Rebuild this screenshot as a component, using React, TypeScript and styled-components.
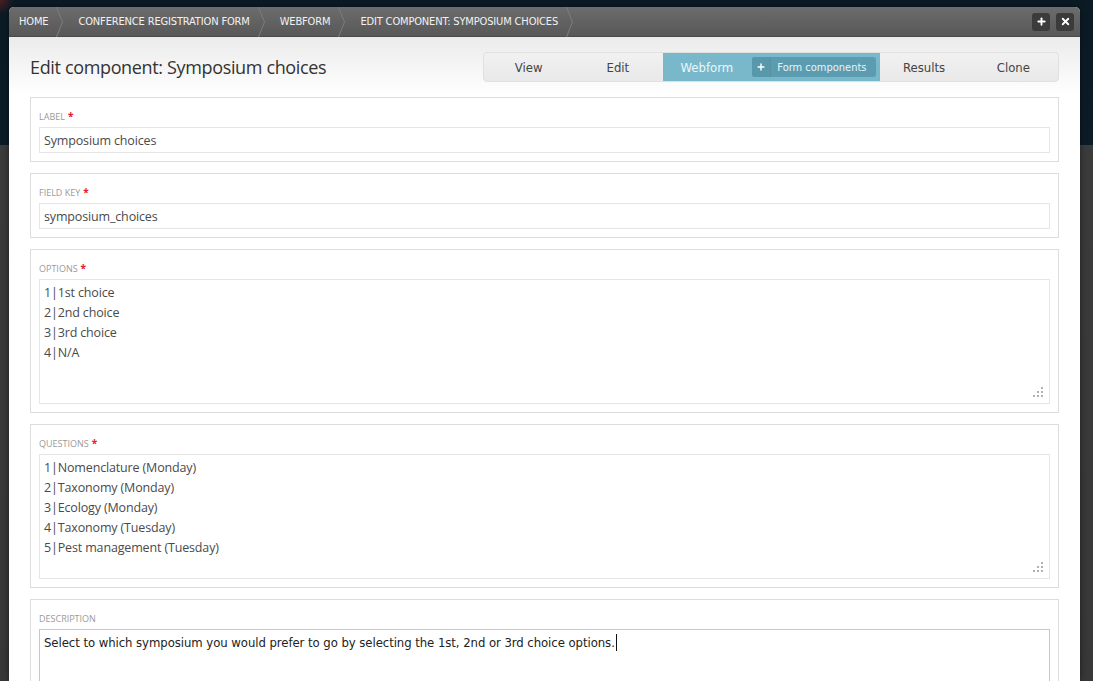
import React from "react";
import styled, { createGlobalStyle } from "styled-components";
import { Plus, X } from "lucide-react";

const CONDENSED = `"Liberation Sans Narrow", "DejaVu Sans Condensed", "Roboto Condensed", "Liberation Sans", sans-serif`;
const BODY = `"Open Sans", "Noto Sans", sans-serif`;

const GlobalStyle = createGlobalStyle`
  html, body {
    margin: 0;
    height: 100%;
    overflow: hidden;
  }
  body {
    font-family: ${BODY};
    background: #3a3a3a;
  }
`;

type Field = {
  label: string;
  required?: boolean;
  kind: "input" | "textarea";
  lines: string[];
  focused?: boolean;
};

const fields: Field[] = [
  { label: "Label", required: true, kind: "input", lines: ["Symposium choices"] },
  { label: "Field key", required: true, kind: "input", lines: ["symposium_choices"] },
  {
    label: "Options",
    required: true,
    kind: "textarea",
    lines: ["1|1st choice", "2|2nd choice", "3|3rd choice", "4|N/A"],
  },
  {
    label: "Questions",
    required: true,
    kind: "textarea",
    lines: [
      "1|Nomenclature (Monday)",
      "2|Taxonomy (Monday)",
      "3|Ecology (Monday)",
      "4|Taxonomy (Tuesday)",
      "5|Pest management (Tuesday)",
    ],
  },
  {
    label: "Description",
    kind: "textarea",
    focused: true,
    lines: [
      "Select to which symposium you would prefer to go by selecting the 1st, 2nd or 3rd choice options.",
    ],
  },
];

const crumbs = [
  "Home",
  "Conference registration form",
  "Webform",
  "Edit component: Symposium choices",
];

export default function App() {
  return (
    <>
      <GlobalStyle />
      <Backdrop>
        <Modal>
          <HeaderBar>
            <Crumbs>
              {crumbs.map((c) => (
                <Crumb key={c}>
                  <span>{c}</span>
                  <Chevron width="7" height="30" viewBox="0 0 7 30">
                    <polyline points="0.5,0 6.5,15 0.5,30" fill="none" stroke="#7c7c7c" strokeWidth="1" />
                  </Chevron>
                </Crumb>
              ))}
            </Crumbs>
            <HeaderButtons>
              <IconButton>
                <Plus size={11} strokeWidth={4} />
              </IconButton>
              <IconButton>
                <X size={11} strokeWidth={4} />
              </IconButton>
            </HeaderButtons>
          </HeaderBar>

          <TitleRow>
            <Title>Edit component: Symposium choices</Title>
            <Tabs>
              <Tab>View</Tab>
              <Tab>Edit</Tab>
              <ActiveTab>
                Webform
                <SubButton>
                  <SubPlus>
                    <Plus size={10} strokeWidth={3.5} />
                  </SubPlus>
                  <SubLabel>Form components</SubLabel>
                </SubButton>
              </ActiveTab>
              <Tab>Results</Tab>
              <Tab>Clone</Tab>
            </Tabs>
          </TitleRow>

          <Form>
            {fields.map((f) => (
              <FieldSet key={f.label}>
                <Label>
                  {f.label}
                  {f.required && <Req>*</Req>}
                </Label>
                {f.kind === "input" ? (
                  <Input>{f.lines[0]}</Input>
                ) : (
                  <TextArea $focused={f.focused}>
                    {f.lines.map((l, i) => (
                      <Line key={i} $condensed={f.focused}>
                        {l}
                        {f.focused && <Caret />}
                      </Line>
                    ))}
                    {!f.focused && (
                      <Grip width="10" height="10" viewBox="0 0 10 10">
                        <rect x="8" y="0" width="2" height="2" fill="#b0b0b0" />
                        <rect x="4" y="4" width="2" height="2" fill="#b0b0b0" />
                        <rect x="8" y="4" width="2" height="2" fill="#b0b0b0" />
                        <rect x="0" y="8" width="2" height="2" fill="#b0b0b0" />
                        <rect x="4" y="8" width="2" height="2" fill="#b0b0b0" />
                        <rect x="8" y="8" width="2" height="2" fill="#b0b0b0" />
                      </Grip>
                    )}
                  </TextArea>
                )}
              </FieldSet>
            ))}
          </Form>
        </Modal>
      </Backdrop>
    </>
  );
}

const Backdrop = styled.div`
  height: 681px;
  padding: 7px 13px 0 9px;
  box-sizing: border-box;
  background:
    radial-gradient(circle at 0 0, rgba(120, 30, 30, 0.6), rgba(120, 30, 30, 0) 14px),
    linear-gradient(to bottom, #0b1b25 0, #0c1c26 145px, #3b3b3b 145px, #383838 100%);
`;

const Modal = styled.div`
  height: 100%;
  background: #fff;
  border-radius: 5px 5px 0 0;
  overflow: hidden;
  display: flex;
  flex-direction: column;
  box-shadow: 0 0 6px rgba(0, 0, 0, 0.5);
`;

const HeaderBar = styled.div`
  height: 30px;
  flex: none;
  display: flex;
  align-items: center;
  justify-content: space-between;
  background: linear-gradient(to bottom, #6c6c6c, #585858);
  border-bottom: 1px solid #4a4a4a;
  box-sizing: border-box;
  padding: 0 6px 0 10px;
`;

const Crumbs = styled.div`
  display: flex;
  align-items: center;
  height: 100%;
`;

const Crumb = styled.div`
  display: flex;
  align-items: center;
  height: 100%;
  font-family: ${CONDENSED};
  font-stretch: condensed;
  font-size: 11px;
  letter-spacing: -0.15px;
  text-transform: uppercase;
  color: #f2f2f2;

  > span {
    margin-right: 8px;
  }
  & + & {
    padding-left: 15px;
  }
`;

const Chevron = styled.svg`
  display: block;
  flex: none;
`;

const HeaderButtons = styled.div`
  display: flex;
  gap: 6px;
`;

const IconButton = styled.div`
  width: 18px;
  height: 18px;
  border-radius: 3px;
  background: #3b3b3b;
  color: #fff;
  display: flex;
  align-items: center;
  justify-content: center;
`;

const TitleRow = styled.div`
  flex: none;
  display: flex;
  align-items: center;
  justify-content: space-between;
  padding: 15px 21px;
  background: linear-gradient(to bottom, #ebebeb 0, #fff 58px);
`;

const Title = styled.h1`
  margin: 0;
  font-family: ${BODY};
  font-weight: 400;
  font-size: 18px;
  color: #333;
  letter-spacing: -0.35px;
`;

const Tabs = styled.div`
  display: flex;
  height: 30px;
  width: 576px;
  box-sizing: border-box;
  border: 1px solid #e0e0e0;
  border-radius: 4px;
  background: linear-gradient(to bottom, #f1f1f1, #e9e9e9);
  overflow: hidden;
`;

const Tab = styled.div`
  flex: 1;
  display: flex;
  align-items: center;
  justify-content: center;
  font-family: ${CONDENSED};
  font-stretch: condensed;
  font-size: 13px;
  color: #444;
`;

const ActiveTab = styled.div`
  width: 217px;
  flex: none;
  display: flex;
  align-items: center;
  justify-content: space-between;
  padding: 0 4px 0 18px;
  box-sizing: border-box;
  background: #79b8ca;
  font-family: ${CONDENSED};
  font-stretch: condensed;
  font-size: 13px;
  color: #eaf6fa;
`;

const SubButton = styled.div`
  display: flex;
  align-items: center;
  height: 20px;
  border-radius: 3px;
  background: #5b9cb0;
  overflow: hidden;
`;

const SubPlus = styled.div`
  width: 18px;
  height: 100%;
  display: flex;
  align-items: center;
  justify-content: center;
  color: #fff;
  border-right: 1px solid #56929f;
  background: #5898ab;
`;

const SubLabel = styled.span`
  padding: 0 9px 0 6px;
  font-size: 11px;
  color: #e8f4f8;
`;

const Form = styled.div`
  display: flex;
  flex-direction: column;
  gap: 11px;
  padding: 0 21px;
`;

const FieldSet = styled.div`
  border: 1px solid #dcdcdc;
  padding: 12px 8px 8px;
  display: flex;
  flex-direction: column;
`;

const Label = styled.div`
  height: 14px;
  font-family: ${BODY};
  font-size: 9px;
  line-height: 14px;
  text-transform: uppercase;
  color: #9a9a9a;
  margin-bottom: 3px;
`;

const Req = styled.span`
  color: #e0202a;
  margin-left: 3px;
  font-size: 10px;
  line-height: 1;
  font-weight: 700;
`;

const Input = styled.div`
  height: 26px;
  flex: none;
  box-sizing: border-box;
  border: 1px solid #e6e6e6;
  padding: 0 4px;
  display: flex;
  align-items: center;
  font-size: 12.5px;
  letter-spacing: -0.15px;
  color: #4a4a4a;
`;

const TextArea = styled.div<{ $focused?: boolean }>`
  position: relative;
  height: 125px;
  flex: none;
  box-sizing: border-box;
  border: 1px solid ${(p) => (p.$focused ? "#b3d0da" : "#e6e6e6")};
  padding: 3px 4px;
`;

const Line = styled.div<{ $condensed?: boolean }>`
  font-family: ${(p) => (p.$condensed ? CONDENSED : BODY)};
  font-stretch: ${(p) => (p.$condensed ? "condensed" : "normal")};
  font-size: ${(p) => (p.$condensed ? "13px" : "12.5px")};
  letter-spacing: ${(p) => (p.$condensed ? "-0.06px" : "-0.15px")};
  line-height: 20px;
  color: ${(p) => (p.$condensed ? "#222" : "#4a4a4a")};
  white-space: pre;
`;

const Caret = styled.span`
  display: inline-block;
  width: 1px;
  height: 17px;
  margin-left: 1px;
  vertical-align: -4px;
  background: #111;
`;

const Grip = styled.svg`
  position: absolute;
  right: 6px;
  bottom: 6px;
`;
